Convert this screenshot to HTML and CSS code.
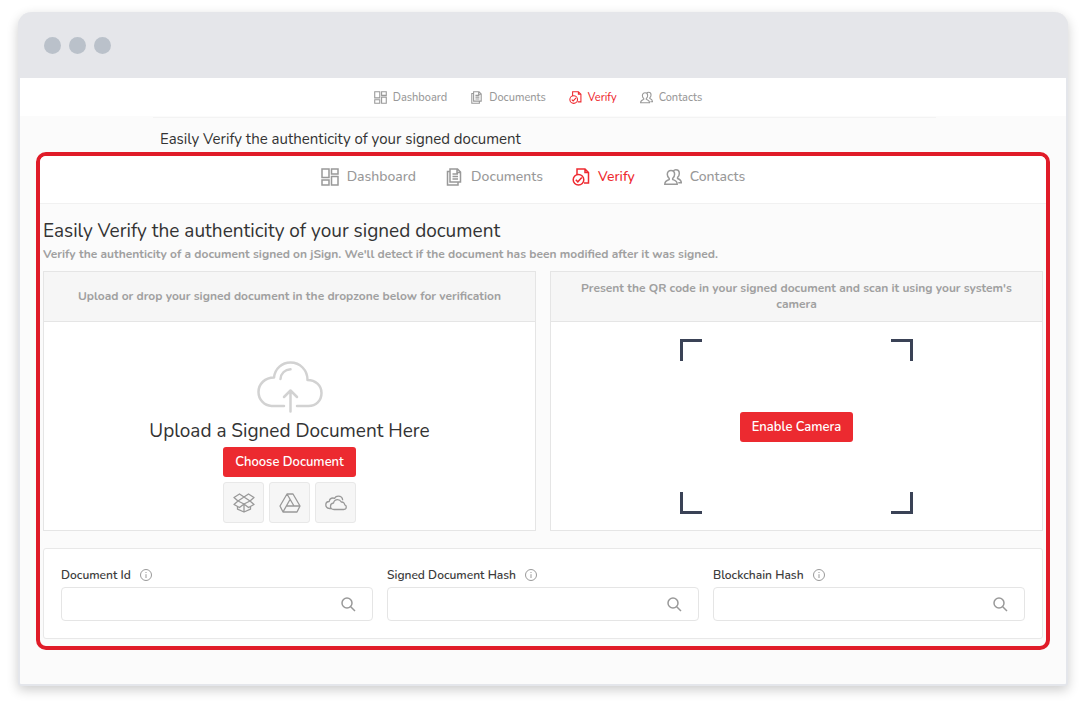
FILE: index.html
```html
<!DOCTYPE html>
<html lang="en">
<head>
    <meta charset="utf-8">
    <meta name="viewport" content="width=device-width, initial-scale=1">
    <title>Verify - jSign</title>
    <link rel="stylesheet" href="styles.css">
</head>
<body>
    <!-- shared icons -->
    <svg class="sprite" aria-hidden="true">
        <symbol id="icon-dashboard" viewBox="0 0 18 18">
            <path d="M1 1h7v8.500H1zM10.500 1H17v5h-6.500zM1 12h7v5H1zM10.500 8.500H17V17h-6.500z"/>
        </symbol>
        <symbol id="icon-documents" viewBox="0 0 18 18">
            <path d="M5 1h7.500L15.500 4v10H5zM12 1v3.500h3.500M5 3.500H2.500V17h10.500v-3M7.500 6h5.500M7.500 8.500h5.500M7.500 11h5.500"/>
        </symbol>
        <symbol id="icon-verify" viewBox="0 0 18 18">
            <path d="M5 7V1h8l3.500 3.500V15H12M13 1v3.500h3.500"/>
            <circle cx="6.500" cy="11.800" r="5.300"/>
            <path d="M3.800 11.800l2 2 4-4.300"/>
        </symbol>
        <symbol id="icon-contacts" viewBox="0 0 18 18">
            <path d="M7 2.500c-2.200 0-3.700 1.500-3.700 3.800 0 1.700.7 3.200 1.900 4v1.200C3 12.300.8 12.800.8 16.200h12.400c0-3.400-2.200-3.900-4.500-4.700v-1.200c1.200-.8 1.900-2.300 1.900-4C10.600 4 9.200 2.500 7 2.500z"/>
            <path d="M9.300 3c.6-.8 1.500-1.200 2.500-1.200 2.200 0 3.500 1.400 3.500 3.700 0 1.700-.6 3-1.700 3.800v1.200c2 .7 3.700 1.300 3.700 4.300h-3"/>
        </symbol>
        <symbol id="icon-info" viewBox="0 0 12 12">
            <circle cx="6" cy="6" r="5.500"/>
            <path d="M6 5.200V9M6 3v1"/>
        </symbol>
        <symbol id="icon-search" viewBox="0 0 15 15">
            <circle cx="6" cy="6" r="5"/>
            <path d="M9.700 9.700l4.300 4.300"/>
        </symbol>
    </svg>

    <div class="window">
        <div class="titlebar">
            <span class="dot"></span>
            <span class="dot"></span>
            <span class="dot"></span>
        </div>

        <nav class="nav nav-small" aria-label="Main">
            <a href="#dashboard"><svg class="icon"><use href="#icon-dashboard"/></svg>Dashboard</a>
            <a href="#documents"><svg class="icon"><use href="#icon-documents"/></svg>Documents</a>
            <a href="#verify" class="active"><svg class="icon"><use href="#icon-verify"/></svg>Verify</a>
            <a href="#contacts"><svg class="icon"><use href="#icon-contacts"/></svg>Contacts</a>
        </nav>
        <h2 class="page-title">Easily Verify the authenticity of your signed document</h2>

        <main class="highlight">
            <nav class="nav nav-large" aria-label="Verify">
                <a href="#dashboard"><svg class="icon"><use href="#icon-dashboard"/></svg>Dashboard</a>
                <a href="#documents"><svg class="icon"><use href="#icon-documents"/></svg>Documents</a>
                <a href="#verify" class="active"><svg class="icon"><use href="#icon-verify"/></svg>Verify</a>
                <a href="#contacts"><svg class="icon"><use href="#icon-contacts"/></svg>Contacts</a>
            </nav>

            <div class="content">
                <h1>Easily Verify the authenticity of your signed document</h1>
                <p class="intro">Verify the authenticity of a document signed on jSign. We'll detect if the document has been modified after it was signed.</p>

                <div class="panels">
                    <section class="panel">
                        <p class="panel-head">Upload or drop your signed document in the dropzone below for verification</p>
                        <div class="panel-body upload">
                            <svg class="cloud" viewBox="0 0 66 52" aria-hidden="true">
                                <path d="M27 45H14.500A13.500 14 0 0 1 1.500 31c0-8 6.500-14.500 15.500-14.500C18 7.500 25 1.500 33.500 1.500c9.500 0 17 7.500 17 17.500C58.500 19 64.500 24.500 64.500 32c0 7.500-5.500 13-13 13H40"/>
                                <path d="M23.500 18c.5-5.500 4.500-9.300 10-9.700M33.500 50.500V30M27 36l6.500-6.500L40 36"/>
                            </svg>
                            <h2>Upload a Signed Document Here</h2>
                            <button type="button" class="btn">Choose Document</button>
                            <div class="sources">
                                <button type="button" class="source" aria-label="Dropbox">
                                    <svg viewBox="0 0 22 20"><path d="M6.500 1L11 4l4.500-3L21 4.500 17 8l4 3.500-5.500 3L11 11l-4.500 3.500-5.500-3L5 8 1 4.500zM11 4L5 8l6 3 6-3zM4.500 13.500v2.700L11 19l6.500-2.800v-2.700M11 11v8"/></svg>
                                </button>
                                <button type="button" class="source" aria-label="Google Drive">
                                    <svg viewBox="0 0 22 20"><path d="M8 1h6l7 12-3 6H4l-3-6zM8 1l7 12h6M11 6.500L4 19M7.500 13H15"/></svg>
                                </button>
                                <button type="button" class="source" aria-label="OneDrive">
                                    <svg viewBox="0 0 22 20"><path d="M6 15.500H4.500C2.500 15.500.8 14 .8 12s1.500-3.500 3.400-3.500C4.500 6.300 6 5 8 5c.6 0 1.100.1 1.500.3C10.300 4 11.700 3.200 13.200 3.200c2.300 0 4.300 1.700 4.500 4"/><path d="M9 16.500c-2 0-3.500-1.500-3.500-3.300 0-1.700 1.300-3 3-3.200.5-2 2-3.300 4-3.300 1.700 0 3 .8 3.800 2.300 2-.2 3.300 1 3.400 2.800 1 .3 1.600 1.200 1.600 2.200 0 1.400-1.100 2.500-2.600 2.500z"/></svg>
                                </button>
                            </div>
                        </div>
                    </section>

                    <section class="panel">
                        <p class="panel-head">Present the QR code in your signed document and scan it using your system's camera</p>
                        <div class="panel-body camera">
                            <div class="scan-frame">
                                <span class="corner top left"></span>
                                <span class="corner top right"></span>
                                <button type="button" class="btn">Enable Camera</button>
                                <span class="corner bottom left"></span>
                                <span class="corner bottom right"></span>
                            </div>
                        </div>
                    </section>
                </div>

                <form class="search-card">
                    <div class="field">
                        <label for="document-id">Document Id <svg class="info" aria-hidden="true"><use href="#icon-info"/></svg></label>
                        <div class="search-box">
                            <input type="text" id="document-id">
                            <button type="submit" aria-label="Search"><svg><use href="#icon-search"/></svg></button>
                        </div>
                    </div>
                    <div class="field">
                        <label for="document-hash">Signed Document Hash <svg class="info" aria-hidden="true"><use href="#icon-info"/></svg></label>
                        <div class="search-box">
                            <input type="text" id="document-hash">
                            <button type="submit" aria-label="Search"><svg><use href="#icon-search"/></svg></button>
                        </div>
                    </div>
                    <div class="field">
                        <label for="blockchain-hash">Blockchain Hash <svg class="info" aria-hidden="true"><use href="#icon-info"/></svg></label>
                        <div class="search-box">
                            <input type="text" id="blockchain-hash">
                            <button type="submit" aria-label="Search"><svg><use href="#icon-search"/></svg></button>
                        </div>
                    </div>
                </form>
            </div>
        </main>
    </div>
</body>
</html>
```
FILE: styles.css
```css
* {
    box-sizing: border-box;
}
body {
    margin: 0;
    padding: 12px 18px 24px;
    background: #fff;
    color: #3c3c3c;
    font-family: Nunito, Lato, "Open Sans", sans-serif;
    font-size: 12px;
    font-weight: 600;
    line-height: 16px;
}
h1, h2, p {
    margin: 0;
}
h1, h2 {
    color: #333;
    font-size: 19px;
    font-weight: 400;
    line-height: 24px;
}
svg {
    fill: none;
    stroke: currentColor;
}
button {
    font: inherit;
    cursor: pointer;
}
.sprite {
    display: none;
}

/* browser window */
.window {
    padding-bottom: 34px;
    border: 2px solid #e4e6eb;
    border-top: 0;
    border-radius: 14px 14px 3px 3px;
    background: #fbfbfb;
    box-shadow: 0 4px 12px rgba(0, 0, 0, 0.2);
}
.titlebar {
    display: flex;
    align-items: center;
    gap: 8px;
    height: 66px;
    margin: 0 -2px;
    padding: 1px 26px 0;
    border-radius: 14px 14px 0 0;
    background: #e5e6ea;
}
.dot {
    width: 17px;
    height: 17px;
    border-radius: 50%;
    background: #bac1ca;
}

/* navigation */
.nav {
    display: flex;
    align-items: center;
    justify-content: center;
    background: #fff;
}
.nav a {
    display: flex;
    align-items: center;
    color: #999;
    font-weight: 500;
    text-decoration: none;
}
.nav a.active {
    color: #ee2a30;
}
.nav .icon {
    stroke-width: 1.5;
}
.nav-small {
    height: 38px;
    gap: 23px;
    padding-top: 1px;
    padding-right: 10px;
    font-size: 11px;
}
.nav-small a {
    gap: 6px;
}
.nav-small .icon {
    width: 13px;
    height: 13px;
}
.nav-large {
    height: 47px;
    gap: 29px;
    padding-right: 20px;
    padding-bottom: 5px;
    border-radius: 6px 6px 0 0;
    font-size: 14px;
}
.nav-large a {
    gap: 8px;
}
.nav-large .icon {
    width: 18px;
    height: 18px;
}
.page-title {
    margin: 1px 130px 0 133px;
    padding: 13px 7px 5px;
    border-top: 1px solid #f3f3f3;
    font-size: 15px;
    line-height: 16px;
}

/* highlighted area */
.highlight {
    margin: 0 16px;
    border: 4px solid #e01b28;
    border-radius: 10px;
}
.content {
    padding: 15px 3px 7px;
    border-top: 1px solid #f1f1f1;
}
.intro {
    margin-top: 3px;
    color: #a0a0a0;
    font-weight: 700;
}
.panels {
    display: grid;
    grid-template-columns: 1fr 1fr;
    gap: 14px;
    margin-top: 9px;
}
.panel {
    display: flex;
    flex-direction: column;
    border: 1px solid #e5e5e5;
    background: #fff;
}
.panel-head {
    display: flex;
    align-items: center;
    justify-content: center;
    min-height: 50px;
    padding: 0 24px 1px;
    border-bottom: 1px solid #e5e5e5;
    background: #f6f6f6;
    color: #a0a0a0;
    font-weight: 700;
    text-align: center;
}
.panel-body {
    display: flex;
    flex: 1;
    flex-direction: column;
    align-items: center;
}
.btn {
    padding: 7px 12px;
    border: 0;
    border-radius: 3px;
    background: #ec2a30;
    color: #fff;
    font-size: 13px;
}

/* upload */
.upload {
    padding: 39px 0 7px;
}
.cloud {
    width: 66px;
    height: 52px;
    color: #d2d2d2;
    stroke-width: 2.5;
    stroke-linecap: round;
    stroke-linejoin: round;
}
.upload h2 {
    margin: 6px 0 4px;
}
.sources {
    display: flex;
    gap: 5px;
    margin-top: 5px;
}
.source {
    display: flex;
    align-items: center;
    justify-content: center;
    width: 41px;
    height: 41px;
    padding: 0;
    border: 1px solid #e8e8e8;
    border-radius: 3px;
    background: #f6f6f6;
    color: #999;
}
.source svg {
    width: 22px;
    height: 20px;
    stroke-width: 1.3;
    stroke-linejoin: round;
}

/* camera */
.camera {
    padding: 17px 0 16px;
}
.scan-frame {
    display: grid;
    flex: 1;
    grid-template-columns: 22px auto 22px;
    grid-template-rows: 22px 1fr 22px;
    justify-content: space-between;
    width: 233px;
}
.scan-frame .btn {
    grid-area: 2 / 2;
    align-self: center;
}
.corner {
    border: 0 solid #3a4256;
}
.top {
    grid-row: 1;
    border-top-width: 3px;
}
.bottom {
    grid-row: 3;
    border-bottom-width: 3px;
}
.left {
    grid-column: 1;
    border-left-width: 3px;
}
.right {
    grid-column: 3;
    border-right-width: 3px;
}

/* search fields */
.search-card {
    display: grid;
    grid-template-columns: repeat(3, 1fr);
    gap: 14px;
    margin-top: 17px;
    padding: 18px 17px 17px;
    border: 1px solid #e8e8e8;
    border-radius: 3px;
    background: #fff;
}
.field label {
    display: flex;
    align-items: center;
    gap: 9px;
    margin-bottom: 4px;
}
.info {
    width: 12px;
    height: 12px;
    color: #999;
}
.search-box {
    display: flex;
    height: 34px;
    border: 1px solid #e5e5e5;
    border-radius: 4px;
    background: #fff;
}
.search-box input {
    flex: 1;
    min-width: 0;
    padding: 0 10px;
    border: 0;
    background: transparent;
    font: inherit;
}
.search-box button {
    display: flex;
    align-items: center;
    padding: 0 16px;
    border: 0;
    background: transparent;
    color: #999;
}
.search-box button svg {
    width: 15px;
    height: 15px;
    stroke-width: 1.5;
}
```
